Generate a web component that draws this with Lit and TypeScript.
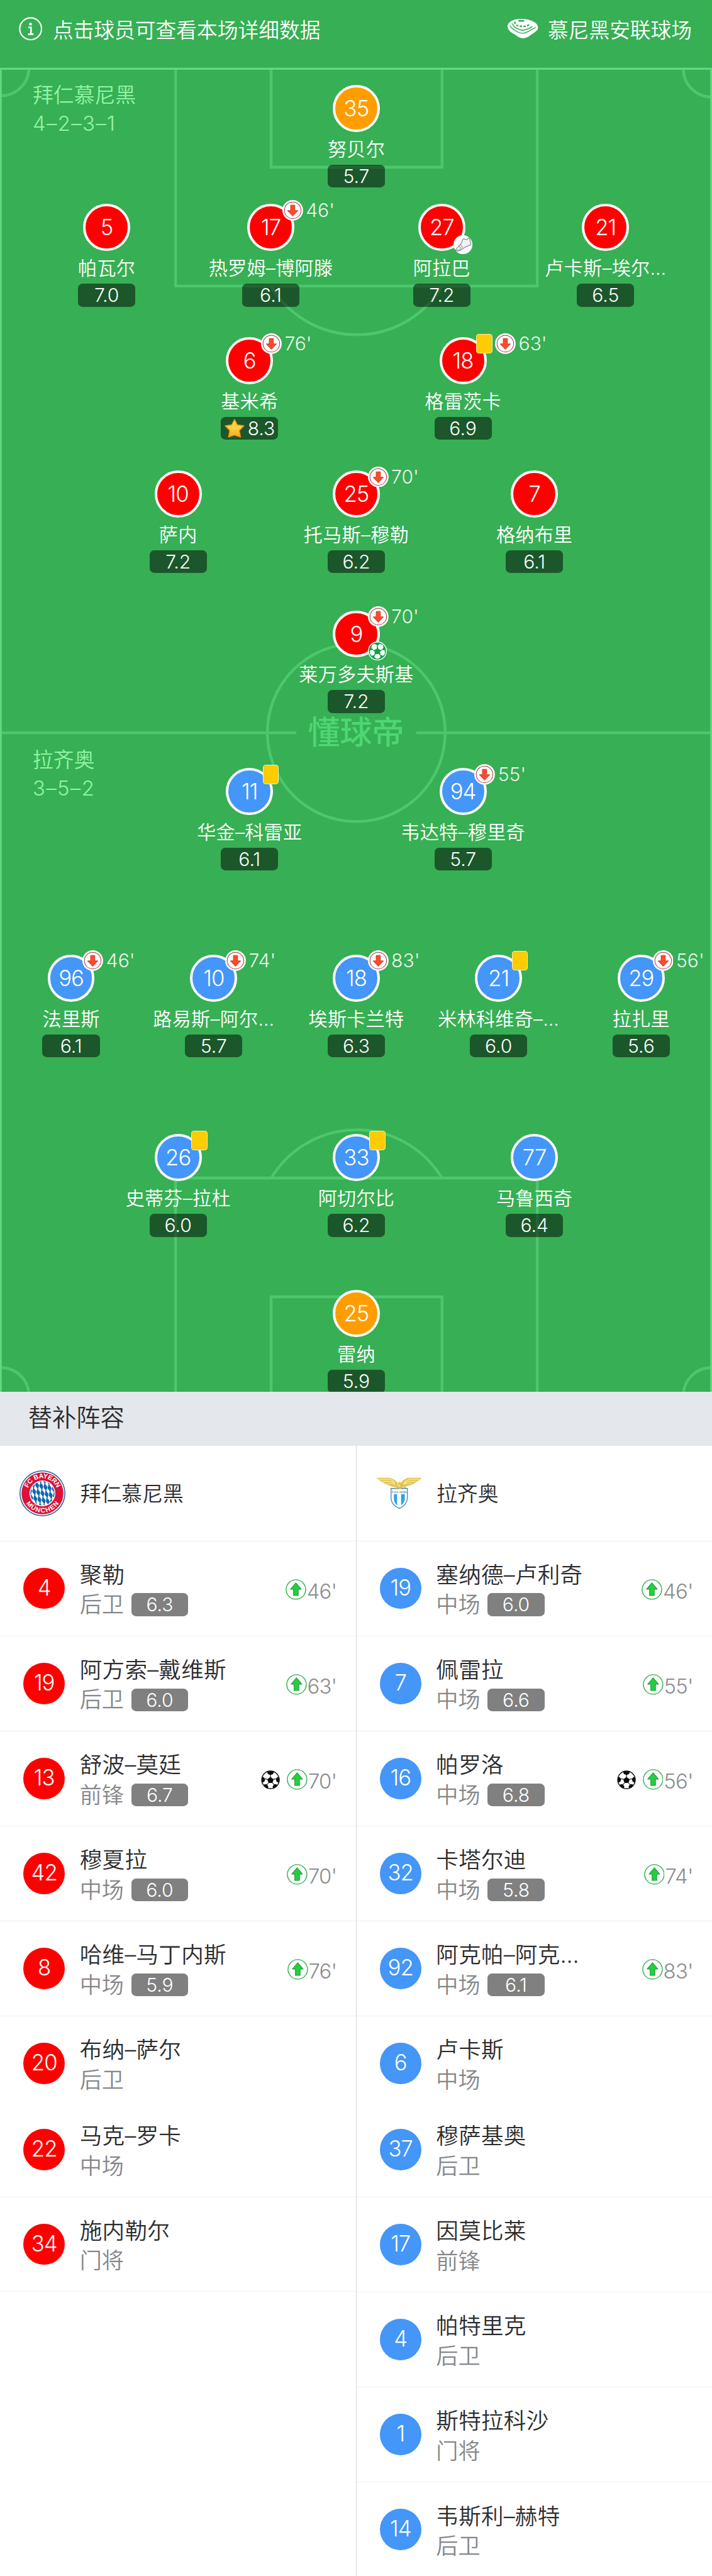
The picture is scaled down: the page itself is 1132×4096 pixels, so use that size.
import { LitElement, html, svg, css, nothing } from "lit";
import { customElement, property } from "lit/decorators.js";
import { classMap } from "lit/directives/class-map.js";

type Side = "home" | "away";

interface Starter {
  x: number;
  y: number;
  no: number;
  name: string;
  rating: string;
  keeper?: boolean;
  card?: boolean;
  off?: string;
  extra?: "goal" | "assist";
  best?: boolean;
}

interface Sub {
  no: number;
  name: string;
  role: string;
  rating?: string;
  on?: string;
  goal?: boolean;
  // no divider between this row and the previous one
  joined?: boolean;
}

// x and y are the middle of the shirt number, in pitch units
const HOME: Starter[] = [
  { x: 621, y: 189, no: 35, name: "努贝尔", rating: "5.7", keeper: true },
  { x: 186, y: 396.5, no: 5, name: "帕瓦尔", rating: "7.0" },
  { x: 472, y: 396.5, no: 17, name: "热罗姆–博阿滕", rating: "6.1", off: "46'" },
  { x: 770, y: 396.5, no: 27, name: "阿拉巴", rating: "7.2", extra: "assist" },
  { x: 1055.5, y: 396.5, no: 21, name: "卢卡斯–埃尔…", rating: "6.5" },
  { x: 435, y: 628.7, no: 6, name: "基米希", rating: "8.3", off: "76'", best: true },
  { x: 807, y: 628.7, no: 18, name: "格雷茨卡", rating: "6.9", card: true, off: "63'" },
  { x: 310.5, y: 861, no: 10, name: "萨内", rating: "7.2" },
  { x: 621, y: 861, no: 25, name: "托马斯–穆勒", rating: "6.2", off: "70'" },
  { x: 931.5, y: 861, no: 7, name: "格纳布里", rating: "6.1" },
  { x: 621, y: 1105, no: 9, name: "莱万多夫斯基", rating: "7.2", off: "70'", extra: "goal" },
];

const AWAY: Starter[] = [
  { x: 435, y: 1379.7, no: 11, name: "华金–科雷亚", rating: "6.1", card: true },
  { x: 807, y: 1379.7, no: 94, name: "韦达特–穆里奇", rating: "5.7", off: "55'" },
  { x: 124, y: 1705, no: 96, name: "法里斯", rating: "6.1", off: "46'" },
  { x: 372.5, y: 1705, no: 10, name: "路易斯–阿尔…", rating: "5.7", off: "74'" },
  { x: 621, y: 1705, no: 18, name: "埃斯卡兰特", rating: "6.3", off: "83'" },
  { x: 869, y: 1705, no: 21, name: "米林科维奇–…", rating: "6.0", card: true },
  { x: 1117.5, y: 1705, no: 29, name: "拉扎里", rating: "5.6", off: "56'" },
  { x: 310.5, y: 2018, no: 26, name: "史蒂芬–拉杜", rating: "6.0", card: true },
  { x: 621, y: 2018, no: 33, name: "阿切尔比", rating: "6.2", card: true },
  { x: 931.5, y: 2018, no: 77, name: "马鲁西奇", rating: "6.4" },
  { x: 621, y: 2290, no: 25, name: "雷纳", rating: "5.9", keeper: true },
];

const HOME_BENCH: Sub[] = [
  { no: 4, name: "聚勒", role: "后卫", rating: "6.3", on: "46'" },
  { no: 19, name: "阿方索–戴维斯", role: "后卫", rating: "6.0", on: "63'" },
  { no: 13, name: "舒波–莫廷", role: "前锋", rating: "6.7", on: "70'", goal: true },
  { no: 42, name: "穆夏拉", role: "中场", rating: "6.0", on: "70'" },
  { no: 8, name: "哈维–马丁内斯", role: "中场", rating: "5.9", on: "76'" },
  { no: 20, name: "布纳–萨尔", role: "后卫" },
  { no: 22, name: "马克–罗卡", role: "中场", joined: true },
  { no: 34, name: "施内勒尔", role: "门将" },
];

const AWAY_BENCH: Sub[] = [
  { no: 19, name: "塞纳德–卢利奇", role: "中场", rating: "6.0", on: "46'" },
  { no: 7, name: "佩雷拉", role: "中场", rating: "6.6", on: "55'" },
  { no: 16, name: "帕罗洛", role: "中场", rating: "6.8", on: "56'", goal: true },
  { no: 32, name: "卡塔尔迪", role: "中场", rating: "5.8", on: "74'" },
  { no: 92, name: "阿克帕–阿克…", role: "中场", rating: "6.1", on: "83'" },
  { no: 6, name: "卢卡斯", role: "中场" },
  { no: 37, name: "穆萨基奥", role: "后卫", joined: true },
  { no: 17, name: "因莫比莱", role: "前锋" },
  { no: 4, name: "帕特里克", role: "后卫" },
  { no: 1, name: "斯特拉科沙", role: "门将" },
  { no: 14, name: "韦斯利–赫特", role: "后卫" },
];

const infoIcon = html`
  <svg width="41" height="41" viewBox="0 0 41 41" fill="none" stroke="#fff">
    <circle cx="20.5" cy="20.5" r="19" stroke-width="2.4" />
    <circle cx="20.3" cy="12.4" r="2.5" fill="#fff" stroke="none" />
    <path d="M16.5 18h4.6v11.5M16 30h9.5" stroke-width="2.8" />
  </svg>`;

const stadiumIcon = html`
  <svg width="55" height="36" viewBox="0 0 55 36" fill="none">
    <path d="M1 14C1 6 12 1 25 1c13 0 28 5 29 14 1 6-4 8-9 12-5 3-9 8-17 8-7 0-11-5-17-8C6 24 1 20 1 14z" fill="#fff" />
    <path d="M5 13c3 5 7 7 12 10 4 2 7 4 12 3 6-1 11-5 21-10" stroke="#37af54" stroke-width="1.6" />
    <path d="M10 9c0 5 5 8 10 10 4 2 7 3 12 1 4-1 10-3 12-6" stroke="#37af54" stroke-width="1.8" />
    <path d="M14 6c-1 5 4 8 11 8 7 1 13-1 14-4" stroke="#37af54" stroke-width="2.6" stroke-dasharray="4 2.4" />
    <path d="M20 4.500h10" stroke="#37af54" stroke-width="3" />
  </svg>`;

const offIcon = html`
  <svg width="36" height="36" viewBox="0 0 36 36">
    <circle cx="18" cy="18" r="18" fill="#fff" />
    <circle cx="18" cy="18" r="14.500" fill="none" stroke="#a8384a" stroke-width="1.100" />
    <path d="M14.300 9h7.400v9.500h5.300L18 28l-9-9.500h5.300z" fill="#fc4b2c" stroke="#c9321f" stroke-width="1" stroke-linejoin="round" />
  </svg>`;

const onIcon = html`
  <svg width="36" height="36" viewBox="0 0 36 36">
    <circle cx="18" cy="18" r="17" fill="#fff" stroke="#2cae4e" stroke-width="1.500" />
    <path d="M18 6.500l9.300 11h-5.200v11h-8.200v-11H8.700z" fill="#23d03c" stroke="#1f9a3c" stroke-width="1.200" stroke-linejoin="round" />
  </svg>`;

const assistIcon = html`
  <svg width="33" height="33" viewBox="0 0 33 33">
    <circle cx="16.500" cy="16.500" r="16.500" fill="#fff" />
    <path d="M16 7.500l2-1.500 5 2 3-3 2 1 2.500 9.500c-2 3-6 3.500-9 4.500-3 2-7 6-13 8l-5-1c0-3 3-5 6-8 3-2 5-6 6.500-11.500z" fill="#f2f2f4" stroke="#77777b" stroke-width="1.100" stroke-linejoin="round" />
    <path d="M9.500 18.500l4.500 6M12.500 16l4 6.500M3.500 26.500c3-.5 7-1 9-2" fill="none" stroke="#77777b" stroke-width="1" />
  </svg>`;

const goalIcon = html`
  <svg width="33" height="33" viewBox="0 0 33 33">
    <circle cx="16.500" cy="16.500" r="15.700" fill="#0aa644" stroke="#fff" stroke-width="1.500" />
    <g fill="#fff">
      <path d="M7 6l5-2 4 3-1 6-5 2-4-4z" />
      <path d="M26 6l-5-2-4 3 1 6 5 2 4-4z" />
      <path d="M3.500 16l4.500-1.500 4 3.500-1 5.500-4.500 1.500-3-4z" />
      <path d="M29.500 16L25 14.500 21 18l1 5.500 4.500 1.500 3-4z" />
      <path d="M13.500 22h6l2.500 4.500-3 3.500h-5L11 26.500z" />
    </g>
  </svg>`;

const ballIcon = html`
  <svg width="33" height="33" viewBox="0 0 33 33">
    <circle cx="16.500" cy="16.500" r="15.300" fill="#fff" stroke="#111" stroke-width="1.600" />
    <g fill="#0b0b0b">
      <path d="M16.500 11.500l5.600 4-2.100 6.500h-7l-2.100-6.500z" />
      <path d="M10.500 2.500C13 1 20 1 22.500 2.500l-1.500 3.700-4.500 2-4.500-2z" />
      <path d="M31.500 12c1 4 .5 7-.5 9.500l-3.600-1.500-1.700-4.500 2.800-4z" />
      <path d="M1.500 12c-1 4-.5 7 .5 9.500L5.600 20l1.700-4.500-2.800-4z" />
      <path d="M28 26.500c-2 2.500-4 4-7 5l-.8-3.500 2.800-3.500 4-.3z" />
      <path d="M5 26.500c2 2.500 4 4 7 5l.8-3.500L10 24.500l-4-.3z" />
    </g>
    <path d="M16.500 8v4M22 15.500l4-1M20 22l3 3M13 22l-3 3M11 15.500l-4-1" stroke="#111" stroke-width="1.200" />
  </svg>`;

const starIcon = html`
  <svg width="37" height="35" viewBox="0 0 37 35">
    <defs>
      <linearGradient id="star" x1="0" y1="0" x2="0" y2="1">
        <stop offset="0" stop-color="#ffd94e" />
        <stop offset=".5" stop-color="#ffcf3c" />
        <stop offset="1" stop-color="#fba51c" />
      </linearGradient>
    </defs>
    <path d="M18.500 2l5 9.500 11.500 1.600-8 8.200L29 33l-10.500-3.500L8 33l2-11.700-8-8.200 11.500-1.600z" fill="url(#star)" stroke="#e88a13" stroke-width="1.600" stroke-linejoin="round" />
  </svg>`;

// lozenges of the Bayern crest, laid out on a slanted grid
const lozenges = () => {
  const out = [];
  for (let row = -4; row <= 4; row++) {
    for (let col = -5; col <= 5; col++) {
      const x = 40 + col * 7.2 + row * 2;
      const y = 40 + row * 12.4 + col * 1.6;
      out.push(svg`<path d="M${x - 1.6} ${y - 7.2}L${x + 3.4} ${y - 0.4}L${x + 1.6} ${y + 7.2}L${x - 3.4} ${y + 0.4}z" />`);
    }
  }
  return out;
};

const bayernCrest = html`
  <svg width="80" height="80" viewBox="0 0 80 80">
    <defs>
      <clipPath id="core"><circle cx="40" cy="40" r="21" /></clipPath>
      <path id="arc-top" d="M13.500 40a26.500 26.500 0 0 1 53 0" />
      <path id="arc-bottom" d="M6.500 40a33.500 33.500 0 0 0 67 0" />
    </defs>
    <circle cx="40" cy="40" r="40" fill="#1f68a5" />
    <circle cx="40" cy="40" r="38.300" fill="#fff" />
    <circle cx="40" cy="40" r="36.500" fill="#dc1238" />
    <circle cx="40" cy="40" r="22.500" fill="#fff" />
    <g clip-path="url(#core)" fill="#0e67b1">${lozenges()}</g>
    <g font-family="Liberation Sans, Arial, sans-serif" font-weight="700" font-size="11.500" fill="#fff" text-anchor="middle">
      <text textLength="64"><textPath href="#arc-top" startOffset="50%">FC BAYERN</textPath></text>
      <text textLength="68"><textPath href="#arc-bottom" startOffset="50%">MÜNCHEN</textPath></text>
    </g>
  </svg>`;

const lazioCrest = html`
  <svg width="80" height="80" viewBox="0 0 80 80">
    <path d="M26 31.500h28.500V48c0 9-6 14.500-14.200 18.500C32 62.500 26 57 26 48z" fill="#fff" stroke="#4a8bb5" stroke-width="1.500" />
    <path d="M31 41.500h5.500V61c-3.500-3-5.500-7-5.500-12zM43.500 41.500H50V49c0 5-3 9-6.500 12z" fill="#2ba6e0" />
    <text x="40.200" y="39" font-family="Liberation Serif, serif" font-weight="700" font-size="5.400" fill="#4c6f93" text-anchor="middle">S.S.LAZIO</text>
    <path d="M0 13h25l8 4 5 5 2-2 4 1 3-4 8-4h25l-5 4-5 3-4 3-7 3-8 2 2 3-7-1-3 2-5-1-4 2 1-3-5-1-8-3-7-3-5-3z" fill="#e6c555" />
    <path d="M5 15.500h20l8 5M12 19h14l7 4M19 22.500h9l5 2M75 15.500H57l-8 5M68 19H55l-7 4M61 22.500h-9l-5 2M38 22l-3 7 5-3 5 3" fill="none" stroke="#f8eab0" stroke-width="1.200" />
    <path d="M34 24l3 3-2 5M46 24l-3 3 2 5" fill="none" stroke="#bd9530" stroke-width="1" />
  </svg>`;

const pitchLines = html`
  <svg class="lines" viewBox="0 0 1241 2426" fill="none" stroke="#4dc76b" stroke-width="5">
    <path d="M306 120v378.500h630.500V120M472.500 120v171.500h298V120" />
    <path d="M306 2430v-376.500h630.500V2430M472.500 2430v-169.500h298V2430" />
    <path d="M472.500 499a173.600 173.600 0 0 0 298 0M472.500 2054a173.600 173.600 0 0 1 298 0" />
    <circle cx="621" cy="1277" r="155" />
    <path d="M3 1277.500h513.500M725.500 1277.500H1238" />
    <circle cx="1.500" cy="118" r="49" />
    <circle cx="1240" cy="120" r="49" />
    <circle cx="1.500" cy="2433" r="49" />
    <circle cx="1240" cy="2433" r="49" />
    <path class="cover" d="M0 0h1241v118H0z" />
    <path d="M0 120h1241" stroke="#62d982" stroke-width="3.500" />
    <path d="M1.500 120v2306M1239.500 120v2306" stroke="#62d982" stroke-width="3" />
  </svg>`;

@customElement("pitch-player")
export class PitchPlayer extends LitElement {
  @property({ attribute: false }) player!: Starter;
  @property() side: Side = "home";

  render() {
    const p = this.player;
    return html`
      <div class="shirt ${p.keeper ? "keeper" : this.side}">${p.no}</div>
      <div class="name">${p.name}</div>
      <div class=${classMap({ rating: true, best: !!p.best })}>
        ${p.best ? starIcon : nothing}<span>${p.rating}</span>
      </div>
      <div class="events">
        ${p.card ? html`<i class="card"></i>` : nothing}
        ${p.off ? html`${offIcon}<span class="time">${p.off}</span>` : nothing}
      </div>
      ${p.extra ? html`<div class="extra">${p.extra === "goal" ? goalIcon : assistIcon}</div>` : nothing}
    `;
  }

  static get styles() {
    return css`
      :host {
        position: absolute;
        display: flex;
        flex-direction: column;
        align-items: center;
        width: 260px;
        margin: -41px 0 0 -130px;
        color: #fff;
      }
      svg {
        display: block;
        flex: none;
      }
      .shirt {
        box-sizing: border-box;
        width: 82px;
        height: 82px;
        border: 4.500px solid #fff;
        border-radius: 50%;
        font-size: 38px;
        font-weight: 300;
        line-height: 73px;
        letter-spacing: -1px;
        text-align: center;
      }
      .home {
        background: #fe0000;
      }
      .away {
        background: #4496f8;
      }
      .keeper {
        background: #ff9d00;
      }
      .name {
        margin-top: 10px;
        font-size: 33px;
        font-weight: 350;
        line-height: 40px;
        letter-spacing: 0.3px;
        white-space: nowrap;
      }
      .rating {
        display: flex;
        align-items: center;
        justify-content: center;
        width: 100px;
        height: 40px;
        margin-top: 7px;
        border-radius: 8px;
        background: rgba(0, 0, 0, 0.5);
        font-size: 33px;
        font-weight: 350;
        line-height: 40px;
      }
      .best {
        gap: 4px;
      }
      .events {
        position: absolute;
        left: 150px;
        top: -7px;
        display: flex;
        align-items: center;
        gap: 5px;
        height: 36px;
      }
      .card {
        box-sizing: border-box;
        width: 28px;
        height: 34px;
        margin-left: 3px;
        border: 1.500px solid #fdf0b8;
        border-radius: 5px;
        background: #ffcb02;
      }
      .time {
        font-size: 33px;
        font-weight: 300;
        line-height: 36px;
        opacity: 0.9;
      }
      .extra {
        position: absolute;
        left: 150px;
        top: 54px;
      }
    `;
  }
}

@customElement("bench-row")
export class BenchRow extends LitElement {
  @property({ attribute: false }) sub!: Sub;
  @property() side: Side = "home";

  render() {
    const s = this.sub;
    return html`
      <div class="shirt ${this.side}">${s.no}</div>
      <div class="info">
        <div class="name">${s.name}</div>
        <div class="role">
          ${s.role}${s.rating ? html`<span class="rating">${s.rating}</span>` : nothing}
        </div>
      </div>
      <div class="events">
        ${s.goal ? html`<span class="goal">${ballIcon}</span>` : nothing}
        ${s.on ? html`${onIcon}<span class="time">${s.on}</span>` : nothing}
      </div>
    `;
  }

  static get styles() {
    return css`
      :host {
        box-sizing: border-box;
        display: flex;
        align-items: center;
        height: 165.650px;
        padding: 0 33px 0 41px;
      }
      svg {
        display: block;
      }
      .shirt {
        width: 72px;
        height: 72px;
        border-radius: 50%;
        color: #fff;
        font-size: 38px;
        font-weight: 300;
        line-height: 70px;
        letter-spacing: -1px;
        text-align: center;
      }
      .home {
        background: #fe0000;
      }
      .away {
        background: #4496f8;
      }
      .info {
        flex: 1;
        margin: 6px 0 0 26px;
        font-weight: 350;
        white-space: nowrap;
      }
      .name {
        color: #2c2c2e;
        font-size: 39px;
        line-height: 51px;
        letter-spacing: 0.3px;
      }
      .role {
        display: flex;
        align-items: center;
        gap: 13px;
        color: #85878a;
        font-size: 38.500px;
        line-height: 51px;
      }
      .rating {
        width: 99px;
        height: 40px;
        border-radius: 8px;
        background: #808080;
        color: #fff;
        font-size: 33px;
        line-height: 40px;
        text-align: center;
      }
      .events {
        display: flex;
        align-items: center;
        gap: 1px;
        margin-top: 4px;
      }
      .goal {
        margin-right: 11px;
      }
      .time {
        color: #8c8c8c;
        font-size: 36px;
        font-weight: 300;
        line-height: 40px;
        letter-spacing: -0.8px;
        margin-top: 5px;
      }
    `;
  }
}

@customElement("app-root")
export class AppRoot extends LitElement {
  _starters(players: Starter[], side: Side) {
    return players.map(
      (p) => html`<pitch-player style="left: ${p.x}px; top: ${p.y}px" side=${side} .player=${p}></pitch-player>`
    );
  }

  _bench(team: string, crest: unknown, subs: Sub[], side: Side) {
    return html`
      <section class="bench">
        <header class="team">${crest}<span class="club">${team}</span></header>
        ${subs.map(
          (s) => html`<bench-row class=${s.joined ? "joined" : ""} side=${side} .sub=${s}></bench-row>`
        )}
      </section>
    `;
  }

  render() {
    return html`
      <main class="page">
        <div class="pitch">
          ${pitchLines}
          <div class="top">
            ${infoIcon}
            <span class="hint">点击球员可查看本场详细数据</span>
            ${stadiumIcon}
            <span class="stadium">慕尼黑安联球场</span>
          </div>
          <div class="formation home">拜仁慕尼黑<div class="scheme">4–2–3–1</div></div>
          <div class="formation away">拉齐奥<div class="scheme">3–5–2</div></div>
          <div class="brand">懂球帝</div>
          ${this._starters(HOME, "home")} ${this._starters(AWAY, "away")}
        </div>
        <h2 class="title">替补阵容</h2>
        <div class="benches">
          ${this._bench("拜仁慕尼黑", bayernCrest, HOME_BENCH, "home")}
          ${this._bench("拉齐奥", lazioCrest, AWAY_BENCH, "away")}
        </div>
      </main>
    `;
  }

  static get styles() {
    return css`
      :host {
        display: block;
        height: 4096px;
        overflow: hidden;
        background: #fff;
        font-family: Inter, "Noto Sans CJK SC", sans-serif;
      }
      .page {
        width: 1241px;
        zoom: 0.91217;
      }
      svg {
        display: block;
        flex: none;
      }
      .pitch {
        position: relative;
        height: 2426.500px;
        overflow: hidden;
        background: #37af54;
      }
      .lines {
        position: absolute;
        inset: 0;
        width: 1241px;
        height: 2426px;
      }
      .cover {
        fill: #37af54;
        stroke: none;
      }
      .top {
        position: relative;
        display: flex;
        align-items: center;
        height: 100px;
        padding: 0 35px 0 33px;
        color: #fff;
        font-size: 35.900px;
        font-weight: 350;
      }
      .hint {
        flex: 1;
        margin-left: 18px;
      }
      .stadium {
        margin-left: 16px;
      }
      .formation {
        position: absolute;
        left: 57px;
        color: #92f5a6;
        font-size: 36px;
        font-weight: 350;
        line-height: 50px;
      }
      .formation.home {
        top: 141px;
      }
      .formation.away {
        top: 1300px;
      }
      .scheme {
        letter-spacing: 1.500px;
      }
      .brand {
        position: absolute;
        left: 0;
        right: 0;
        top: 1248px;
        color: #4ed672;
        font-size: 56px;
        font-weight: 500;
        line-height: 60px;
        text-align: center;
      }
      .title {
        height: 94px;
        margin: 0;
        padding-left: 49px;
        background: #e4e7ec;
        color: #2c2c2e;
        font-size: 42px;
        font-weight: 350;
        line-height: 90px;
      }
      .benches {
        display: grid;
        grid-template-columns: 620px 621px;
        min-height: 1975px;
      }
      .bench + .bench {
        border-left: 1px solid #d6d6d8;
      }
      .team {
        display: flex;
        align-items: center;
        gap: 26px;
        height: 165px;
        padding-left: 34px;
        color: #2c2c2e;
        font-size: 36px;
        font-weight: 350;
      }
      .club {
        margin-top: -5px;
      }
      bench-row {
        border-top: 2px solid #efefef;
      }
      /* pulled up so that the gap between the joined pair is tighter */
      bench-row.joined {
        margin-top: -15.650px;
        border-top-color: transparent;
      }
      .bench:first-child bench-row:last-child {
        border-bottom: 2px solid #efefef;
      }
    `;
  }
}
